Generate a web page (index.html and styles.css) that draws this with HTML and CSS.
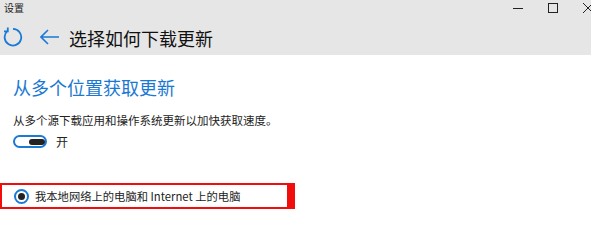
FILE: index.html
```html
<!DOCTYPE html>
<html lang="zh-CN">
<head>
<meta charset="utf-8">
<link rel="stylesheet" href="styles.css">
</head>
<body>
<div class="app">
  <div class="top">
    <div class="titlebar">
      <span class="apptitle">设置</span>
      <div class="winctrls">
        <span class="ctrl"><svg width="10" height="10" viewBox="0 0 10 10"><path d="M0 5.5H10" stroke="#222" stroke-width="1"/></svg></span>
        <span class="ctrl"><svg width="10" height="10" viewBox="0 0 10 10"><rect x="0.5" y="0.5" width="9" height="9" fill="none" stroke="#222" stroke-width="1"/></svg></span>
        <span class="ctrl"><svg width="10" height="10" viewBox="0 0 10 10"><path d="M0 0L10 10M10 0L0 10" stroke="#222" stroke-width="1"/></svg></span>
      </div>
    </div>
    <div class="header">
      <svg class="refresh" width="20" height="20" viewBox="0 0 20 20"><path d="M4.2 4.2A8.3 8.3 0 1 0 10 1.9" fill="none" stroke="#1a7ad6" stroke-width="1.8"/><path d="M1 4.4H4.8V0.6" fill="none" stroke="#1a7ad6" stroke-width="1.8"/></svg>
      <svg class="back" width="20" height="16" viewBox="0 0 20 16"><path d="M1 8H19M8 1L1 8L8 15" fill="none" stroke="#1a7ad6" stroke-width="1.6"/></svg>
      <h1 class="pagetitle">选择如何下载更新</h1>
    </div>
  </div>
  <div class="content">
    <h2 class="section">从多个位置获取更新</h2>
    <p class="desc">从多个源下载应用和操作系统更新以加快获取速度。</p>
    <div class="toggle-row">
      <span class="toggle"><span class="knob"></span></span>
      <span class="toggle-label">开</span>
    </div>
    <div class="option">
      <span class="radio"><span class="dot"></span></span>
      <span class="option-label">我本地网络上的电脑和 Internet 上的电脑</span>
    </div>
  </div>
</div>
</body>
</html>
```

FILE: styles.css
```css
* { box-sizing: border-box; }
html, body { margin: 0; padding: 0; background: #fff; }
body { font-family: "Noto Sans CJK SC", "Noto Sans", sans-serif; color: #1a1a1a; }
.app { width: 591px; height: 252px; overflow: hidden; background: #fff; }
.top { background: #e6e6e6; height: 55px; }
.titlebar { height: 16px; display: flex; align-items: center; justify-content: space-between; padding-left: 4px; overflow: hidden; }
.apptitle { font-size: 10px; line-height: 12px; color: #222; }
.winctrls { display: flex; margin-right: -14px; }
.ctrl { width: 35px; height: 16px; display: flex; align-items: center; justify-content: center; }
.header { height: 39px; display: flex; align-items: center; padding-left: 3px; padding-top: 3px; }
.refresh { display: block; }
.back { display: block; margin-left: 17px; }
.pagetitle { margin: 0 0 0 9px; font-size: 18px; font-weight: 400; line-height: 24px; color: #111; padding-top: 2px; }
.content { padding-left: 13px; padding-top: 20px; }
.section { margin: 0; font-size: 18px; font-weight: 400; line-height: 24px; color: #1a78d2; }
.desc { margin: 13px 0 0; font-size: 11.5px; line-height: 16px; color: #222; }
.toggle-row { display: flex; align-items: center; margin-top: 7px; height: 13px; }
.toggle { width: 34px; height: 13px; border: 2px solid #1a7ad6; border-radius: 7px; display: flex; align-items: center; padding-left: 14px; }
.knob { width: 16px; height: 6px; background: #222; border-radius: 3px; }
.toggle-label { margin-left: 9px; font-size: 12px; line-height: 14px; color: #222; }
.option { margin: 35px 0 0 -13px; width: 295px; height: 26px; border: 2px solid #f20d0d; border-right-width: 8px; display: flex; align-items: center; padding-left: 12px; }
.radio { width: 15px; height: 15px; border: 2px solid #1a7ad6; border-radius: 50%; display: flex; align-items: center; justify-content: center; }
.dot { width: 7px; height: 7px; background: #222; border-radius: 50%; }
.option-label { margin-left: 6px; font-size: 11.3px; line-height: 16px; color: #222; }
```
